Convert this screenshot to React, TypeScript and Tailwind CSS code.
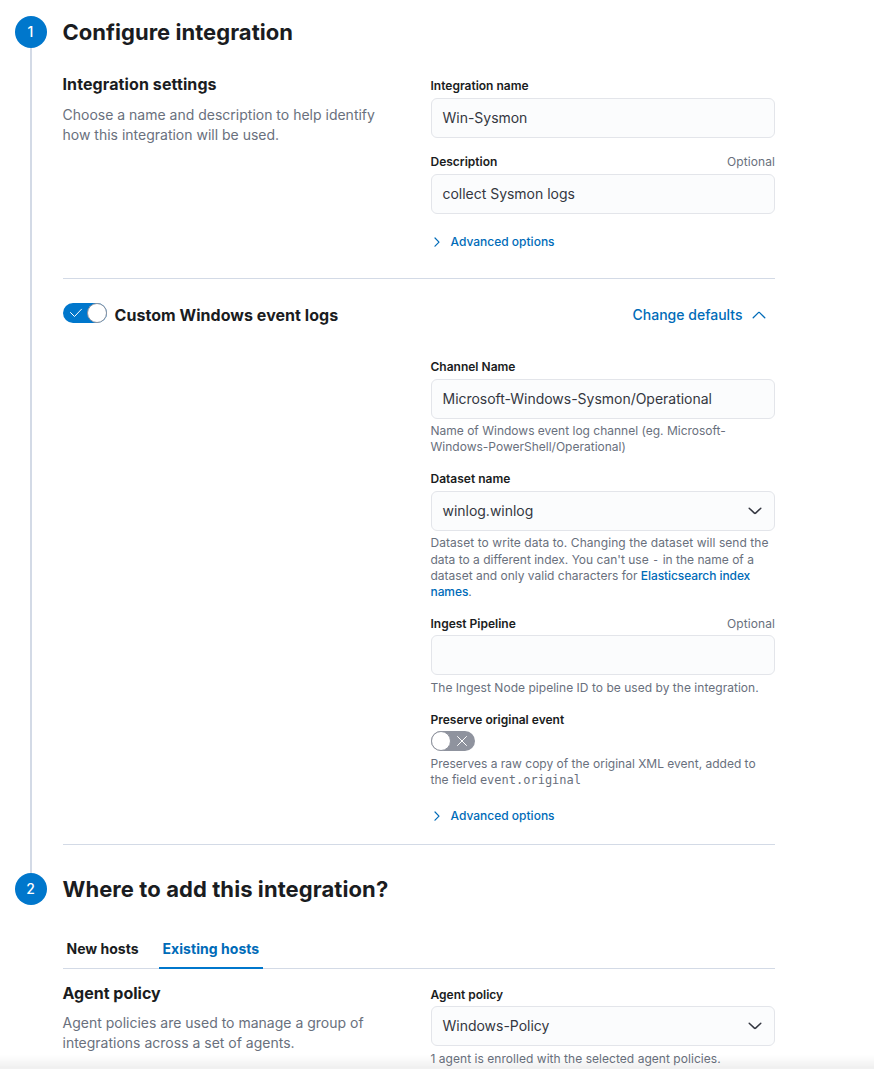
import type { ReactNode } from "react";

function Label({ children, optional }: { children: ReactNode; optional?: boolean }) {
  return (
    <div className="-ml-[0.5px] flex h-4 items-center justify-between text-xs leading-4">
      <span className="font-semibold text-[#1a1c21]">{children}</span>
      {optional && <span className="tracking-[0.08px] text-[#69707d]">Optional</span>}
    </div>
  );
}

function Field({ value, select }: { value?: string; select?: boolean }) {
  return (
    <div className="flex h-10 items-center justify-between rounded-md border border-[#e3e5ea] bg-[#fbfcfd] pr-[11px] pl-[10.5px] text-sm tracking-[-0.02px] text-[#343741]">
      <span>{value}</span>
      {select && (
        <svg width="16" height="16" viewBox="0 0 16 16" fill="none" stroke="#343741" strokeWidth="1.5" strokeLinecap="round" strokeLinejoin="round">
          <path d="M2.2 5.2 7.4 10.1a.9.9 0 0 0 1.2 0L13.8 5.2" />
        </svg>
      )}
    </div>
  );
}

function Help({ children }: { children: ReactNode }) {
  return <div className="-ml-[0.5px] text-xs leading-4 whitespace-nowrap text-[#69707d]">{children}</div>;
}

function Advanced() {
  return (
    <div className="flex h-4 items-center text-xs leading-4 font-medium text-[#006bb8]">
      <svg className="mr-[7.5px] shrink-0" width="12" height="16" viewBox="0 0 12 16" fill="none" stroke="currentColor" strokeWidth="1.2" strokeLinecap="round" strokeLinejoin="round">
        <path d="M4 4 8 8.1 4 12.2" />
      </svg>
      <span>Advanced options</span>
    </div>
  );
}

function Switch({ on }: { on?: boolean }) {
  return (
    <svg className="block shrink-0" width="44" height="20" viewBox="0 0 44 20" fill="none">
      <rect width="44" height="20" rx="10" fill={on ? "#0077cc" : "#8f939e"} />
      <circle cx={on ? 34 : 10} cy="10" r="9.5" fill="#fff" stroke="#8f939e" />
      {on ? (
        <path d="M7.5 9.5 11.5 13.5 18.5 6.2" stroke="#fff" strokeLinecap="round" strokeLinejoin="round" />
      ) : (
        <path d="M26.5 5.5 35.5 14.5M35.5 5.5 26.5 14.5" stroke="#fff" strokeLinecap="round" />
      )}
    </svg>
  );
}

function StepNumber({ children }: { children: ReactNode }) {
  return (
    <div className="flex size-8 shrink-0 items-center justify-center rounded-full bg-[#0077cc] pr-px text-sm font-medium text-white">
      {children}
    </div>
  );
}

export default function App() {
  return (
    <div className="relative h-[1069px] w-[874px] overflow-hidden bg-white pt-4 pl-[15px] font-['Inter',sans-serif] text-[#343741]">
      <section className="flex h-[857px] gap-4">
        <div className="flex w-8 flex-col items-center">
          <StepNumber>1</StepNumber>
          <div className="w-0.5 grow bg-[#d3dae6]" />
        </div>
        <div className="w-[712px]">
          <h2 className="-ml-[0.5px] h-8 text-[22px] leading-8 font-bold tracking-[0.03px] whitespace-nowrap text-[#1a1c21]">Configure integration</h2>
          <div className="flex h-[231px] border-b border-[#d3dae6] pt-[26px]">
            <div className="w-[368px] whitespace-nowrap">
              <h3 className="-ml-[0.5px] h-5 text-base leading-5 font-bold tracking-[0.1px] text-[#1a1c21]">Integration settings</h3>
              <p className="mt-[11px] -ml-[0.5px] text-sm leading-5 text-[#69707d]">
                Choose a name and description to help identify<br />how this integration will be used.
              </p>
            </div>
            <div className="w-[344px] pt-1">
              <Label>Integration name</Label>
              <div className="mt-1"><Field value="Win-Sysmon" /></div>
              <div className="mt-4"><Label optional>Description</Label></div>
              <div className="mt-1"><Field value="collect Sysmon logs" /></div>
              <div className="mt-5"><Advanced /></div>
            </div>
          </div>
          <div className="flex h-[80px] items-start pt-6">
            <Switch on />
            <h3 className="mt-0.5 ml-[7.5px] text-base leading-5 font-bold tracking-[0.05px] whitespace-nowrap text-[#1a1c21]">Custom Windows event logs</h3>
            <div className="mt-0.5 mr-2 ml-auto flex h-5 items-center gap-[8.5px] text-sm leading-5 font-medium text-[#006bb8]">
              <span>Change defaults</span>
              <svg width="16" height="16" viewBox="0 0 16 16" fill="none" stroke="currentColor" strokeWidth="1.3" strokeLinecap="round" strokeLinejoin="round">
                <path d="M2.2 10.8 7.4 5.6a.9.9 0 0 1 1.2 0L13.8 10.8" />
              </svg>
            </div>
          </div>
          <div className="h-[486px] border-b border-[#d3dae6] pl-[368px]">
            <Label>Channel Name</Label>
            <div className="mt-1"><Field value="Microsoft-Windows-Sysmon/Operational" /></div>
            <div className="mt-1">
              <Help>Name of Windows event log channel (eg. Microsoft-<br />Windows-PowerShell/Operational)</Help>
            </div>
            <div className="mt-4"><Label>Dataset name</Label></div>
            <div className="mt-1"><Field value="winlog.winlog" select /></div>
            <div className="mt-1">
              <Help>
                <span className="block h-4 tracking-[0.06px]">Dataset to write data to. Changing the dataset will send the</span>
                <span className="block h-[17px] pt-px">data to a different index. You can't use <code className="font-['DejaVu_Sans_Mono',monospace] leading-none">-</code> in the name of a</span>
                <span className="block h-4">dataset and only valid characters for <a className="font-medium tracking-[-0.08px] text-[#006bb8]">Elasticsearch index</a></span>
                <span className="block h-4"><a className="font-medium tracking-[-0.08px] text-[#006bb8]">names</a>.</span>
              </Help>
            </div>
            <div className="mt-4"><Label optional>Ingest Pipeline</Label></div>
            <div className="mt-[3px]"><Field /></div>
            <div className="mt-[5px] tracking-[0.03px]"><Help>The Ingest Node pipeline ID to be used by the integration.</Help></div>
            <div className="mt-4"><Label>Preserve original event</Label></div>
            <div className="mt-[3px]"><Switch /></div>
            <div className="mt-[5px]">
              <Help>
                <span className="block h-4">Preserves a raw copy of the original XML event, added to</span>
                <span className="block h-4">the field <code className="font-['DejaVu_Sans_Mono',monospace] leading-none">event.original</code></span>
              </Help>
            </div>
            <div className="mt-5"><Advanced /></div>
          </div>
        </div>
      </section>
      <section className="flex gap-4">
        <StepNumber>2</StepNumber>
        <div className="w-[712px]">
          <h2 className="-ml-[0.5px] h-8 text-[22px] leading-8 font-bold tracking-[0.08px] whitespace-nowrap text-[#1a1c21]">Where to add this integration?</h2>
          <div className="mt-6 flex h-10 gap-4 border-b border-[#d3dae6] text-sm leading-[40px] font-bold whitespace-nowrap">
            <div className="h-10 w-20 px-[3.5px] text-[#1a1c21]">New hosts</div>
            <div className="h-10 w-[104px] border-b-2 border-[#0077cc] px-[3.5px] tracking-[0.05px] text-[#006bb8]">Existing hosts</div>
          </div>
          <div className="flex pt-[14px]">
            <div className="w-[368px] whitespace-nowrap">
              <h3 className="-ml-[0.5px] h-5 text-base leading-5 font-bold text-[#1a1c21]">Agent policy</h3>
              <p className="mt-[10px] -ml-[0.5px] text-sm leading-5 text-[#69707d]">
                Agent policies are used to manage a group of<br />integrations across a set of agents.
              </p>
            </div>
            <div className="w-[344px] pt-1">
              <Label>Agent policy</Label>
              <div className="mt-[3px]"><Field value="Windows-Policy" select /></div>
              <div className="mt-[5px] tracking-[0.04px]"><Help>1 agent is enrolled with the selected agent policies.</Help></div>
            </div>
          </div>
        </div>
      </section>
      <div className="pointer-events-none absolute inset-x-0 bottom-0 h-3.5 border-b border-black/5 bg-linear-to-b from-black/0 to-black/6" />
    </div>
  );
}
